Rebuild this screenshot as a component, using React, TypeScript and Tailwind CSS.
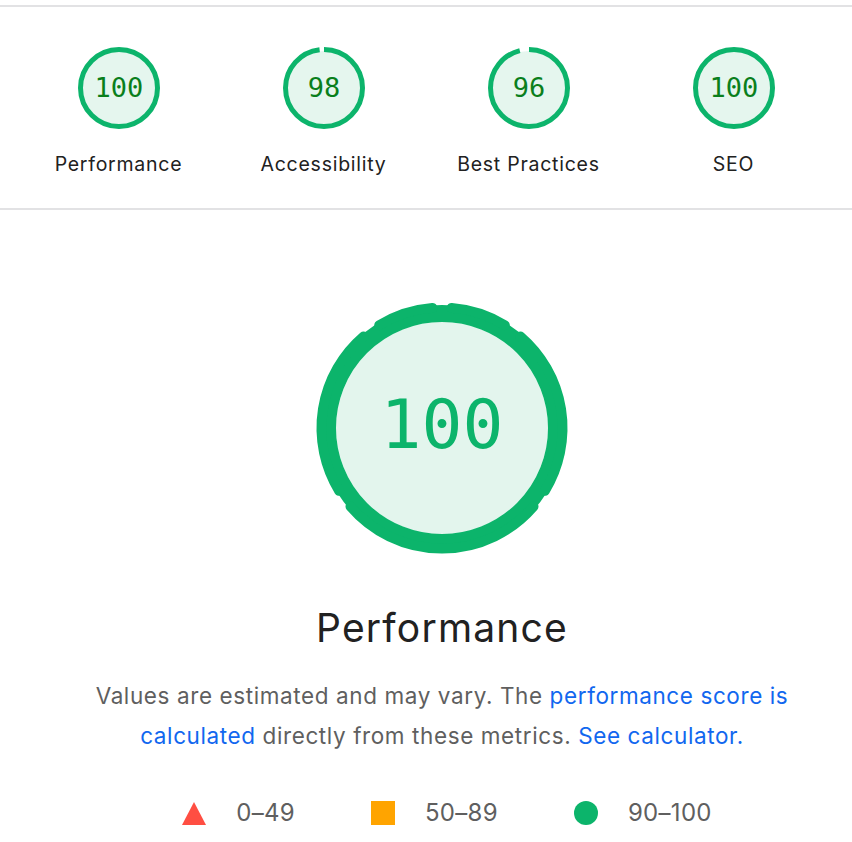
import React from 'react'

const GREEN = '#0cb46b'

const categories = [
  { label: 'Performance', score: 100 },
  { label: 'Accessibility', score: 98 },
  { label: 'Best Practices', score: 96 },
  { label: 'SEO', score: 100 },
]

// metric weights, clockwise from the top
const metricArcs = [
  [0, 36],
  [36, 126],
  [126, 234],
  [234, 324],
  [324, 360],
]

function SmallGauge({ score }: { score: number }) {
  const r = 38.5
  const c = 2 * Math.PI * r
  return (
    <svg width="82" height="82" viewBox="0 0 82 82">
      <circle cx="41" cy="41" r="37" fill="#e5f6ee" />
      <circle
        cx="41"
        cy="41"
        r={r}
        fill="none"
        stroke={GREEN}
        strokeWidth="5"
        strokeDasharray={`${(score / 100) * c} ${c}`}
        transform="rotate(-90 41 41)"
      />
      <text
        x="41"
        y="42"
        textAnchor="middle"
        dominantBaseline="middle"
        fontFamily="'DejaVu Sans Mono', monospace"
        fontSize="27"
        fill="#0a7f1c">
        {score}
      </text>
    </svg>
  )
}

function arcPath(cx: number, cy: number, r: number, a0: number, a1: number) {
  const p = (a: number) => {
    const rad = ((a - 90) * Math.PI) / 180
    return [cx + r * Math.cos(rad), cy + r * Math.sin(rad)]
  }
  const [x0, y0] = p(a0)
  const [x1, y1] = p(a1)
  const large = a1 - a0 > 180 ? 1 : 0
  return `M ${x0} ${y0} A ${r} ${r} 0 ${large} 1 ${x1} ${y1}`
}

function BigGauge() {
  return (
    <svg width="260" height="260" viewBox="0 0 260 260">
      <circle cx="130" cy="130" r="106" fill="#e3f5ed" />
      <circle cx="130" cy="130" r="114.5" fill="none" stroke={GREEN} strokeWidth="17" />
      {metricArcs.map(([a0, a1]) => (
        <path
          key={a0}
          d={arcPath(130, 130, 120.5, a0 + 4.6, a1 - 4.6)}
          fill="none"
          stroke={GREEN}
          strokeWidth="10"
          strokeLinecap="round"
        />
      ))}
      <text
        x="130"
        y="131"
        textAnchor="middle"
        dominantBaseline="middle"
        fontFamily="'DejaVu Sans Mono', monospace"
        fontSize="68"
        fill={GREEN}>
        100
      </text>
    </svg>
  )
}

export default function App() {
  return (
    <div
      className="w-[852px] h-[842px] overflow-hidden bg-white text-[#212121]"
      style={{ fontFamily: 'Inter, "Noto Sans", sans-serif' }}>
      <div className="pt-[5px]">
        <div className="grid grid-cols-4 px-4 pt-10 pb-8 border-y-2 border-[#e2e2e4]">
          {categories.map((c) => (
            <div key={c.label} className="flex flex-col items-center">
              <SmallGauge score={c.score} />
              <div className="mt-[23px] text-[19.5px] leading-6 tracking-[0.75px]">{c.label}</div>
            </div>
          ))}
        </div>
      </div>

      <div className="pl-8 flex flex-col items-center">
        <div className="mt-[88px]">
          <BigGauge />
        </div>
        <h1 className="mt-12 text-[39px] leading-[44px] tracking-[1.2px]">Performance</h1>
        <p className="mt-[26px] text-center text-[22.5px] leading-10 tracking-[0.6px] text-[#5f5f5f]">
          Values are estimated and may vary. The{' '}
          <a className="text-[#1167ef]">
            performance score is
            <br />
            calculated
          </a>{' '}
          directly from these metrics. <a className="text-[#1167ef]">See calculator.</a>
        </p>
        <div className="mt-[45px] ml-[10px] flex items-center gap-[76px] text-[24px] leading-6 tracking-[0.3px] text-[#5f5f5f]">
          <div className="flex items-center gap-[30px]">
            <svg width="24" height="24" viewBox="0 0 24 24">
              <polygon points="12,1 24,24 0,24" fill="#ff4e42" />
            </svg>
            <span>0–49</span>
          </div>
          <div className="flex items-center gap-[30px]">
            <div className="w-6 h-6 bg-[#ffa400]" />
            <span>50–89</span>
          </div>
          <div className="flex items-center gap-[30px]">
            <div className="w-6 h-6 rounded-full bg-[#0cb46b]" />
            <span>90–100</span>
          </div>
        </div>
      </div>
    </div>
  )
}
